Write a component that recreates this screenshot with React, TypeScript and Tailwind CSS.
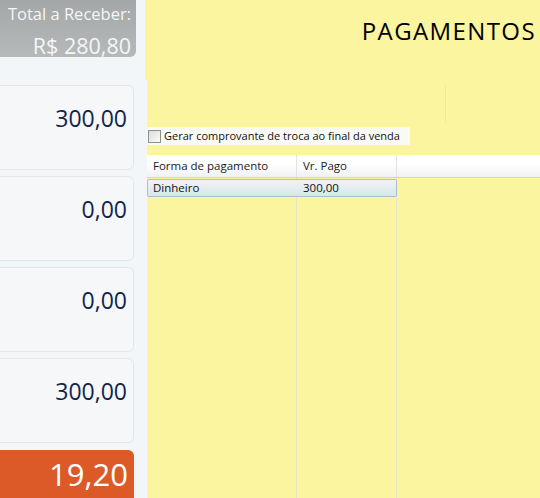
import React from 'react';

const cards = ['300,00', '0,00', '0,00', '300,00'];

export default function App() {
  return (
    <div className="flex h-[498px] w-[540px] overflow-hidden bg-[#f3f6f8]">
      <div className="flex w-[145px] shrink-0 flex-col">
        <div
          className="flex h-[57px] w-[136px] shrink-0 flex-col items-end rounded-br-md bg-gradient-to-b from-[#a4a7a8] to-[#b6b9ba] pr-[5px] pt-[3px] text-[#f4f6f6]"
          style={{ fontFamily: '"Open Sans", sans-serif' }}
        >
          <span className="whitespace-nowrap text-[16.5px] leading-[22px]">Total a Receber:</span>
          <span className="mt-[8px] whitespace-nowrap text-[21.5px] leading-[26px]">R$ 280,80</span>
        </div>
        <div className="mt-[28px] flex shrink-0 flex-col gap-[6px]" style={{ fontFamily: '"Open Sans", sans-serif' }}>
          {cards.map((v, i) => (
            <div
              key={i}
              className="ml-[-10px] flex h-[85px] w-[144px] shrink-0 justify-end rounded-md border border-[#e2e6e9] bg-[#f5f7f9] pr-[6px] pt-[17px]"
            >
              <span className="text-[23px] leading-[30px] text-[#13244a]">{v}</span>
            </div>
          ))}
          <div className="ml-[-10px] mt-px flex h-[60px] w-[144px] shrink-0 justify-end rounded-t-md bg-[#dc5a28] pr-[6px] pt-[5px]">
            <span className="text-[31px] leading-[38px] text-white">19,20</span>
          </div>
        </div>
      </div>
      <div className="flex flex-1 flex-col">
        <div className="flex h-[80px] shrink-0 items-start justify-end bg-[#fbf59f] pr-[4px] pt-[15px]">
          <span className="text-[24px] leading-[32px] tracking-[1.4px] text-black" style={{ fontFamily: '"Open Sans", sans-serif' }}>
            PAGAMENTOS
          </span>
        </div>
        <div className="ml-[2px] flex flex-1 flex-col bg-[#fbf59f]" style={{ fontFamily: '"Open Sans", sans-serif' }}>
          <div className="flex h-[47px] shrink-0 items-start">
            <div className="ml-[298px] mt-[5px] h-[37px] w-px bg-[#e2e8c4]" />
          </div>
          <div className="flex h-[18px] w-[263px] shrink-0 items-center gap-[3px] bg-[#fafaf4] pl-px">
            <span className="h-[13px] w-[13px] shrink-0 border border-[#8e8f8f] bg-gradient-to-br from-[#dcdcdc] to-[#fbfbfb]" />
            <span className="whitespace-nowrap text-[11px] leading-[16px] text-[#111]">Gerar comprovante de troca ao final da venda</span>
          </div>
          <div className="h-[10px] shrink-0" />
          <div className="flex h-[23px] shrink-0 border-b border-[#d5d5d5] bg-gradient-to-b from-white from-40% to-[#f0f1f3] text-[11.5px] text-[#1a1a1a]">
            <div className="flex w-[150px] items-center border-r border-[#e3e3e3] pl-[6px]">Forma de pagamento</div>
            <div className="flex w-[100px] items-center border-r border-[#e3e3e3] pl-[6px]">Vr. Pago</div>
            <div className="flex-1" />
          </div>
          <div className="relative flex-1">
            <div className="absolute left-[149px] top-0 h-full w-px bg-[#e2e8c4]" />
            <div className="absolute left-[249px] top-0 h-full w-px bg-[#e2e8c4]" />
            <div className="relative mt-px flex h-[18px] w-[250px] items-center rounded-[2px] border border-[#a7c0cf] bg-gradient-to-b from-[#eef4f5] to-[#d9e7ea] text-[11.5px] text-[#111]">
              <span className="w-[149px] pl-[5px]">Dinheiro</span>
              <span className="pl-[6px]">300,00</span>
            </div>
          </div>
        </div>
      </div>
    </div>
  );
}
